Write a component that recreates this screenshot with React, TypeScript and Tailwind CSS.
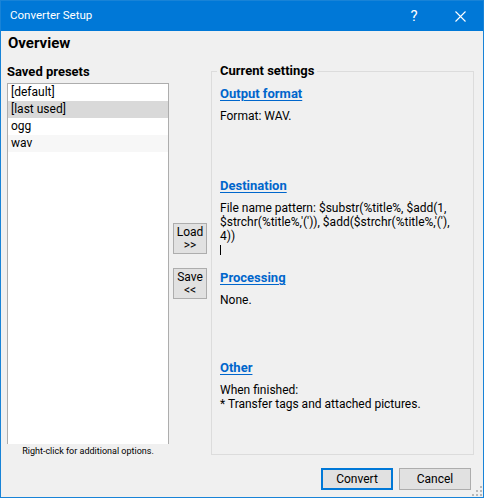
import React from 'react';

const presets = [
  { name: '[default]', bg: '' },
  { name: '[last used]', bg: 'bg-[#d9d9d9]' },
  { name: 'ogg', bg: '' },
  { name: 'wav', bg: 'bg-[#f7f7f7]' },
];

const SectionLink: React.FC<{ label: string }> = ({ label }) => (
  <div className="h-[18px] leading-[18px]">
    <span className="text-[13px] font-bold text-[#0066cc] underline underline-offset-2 cursor-pointer">{label}</span>
  </div>
);

const App: React.FC = () => {
  return (
    <div className="w-[484px] h-[498px] border border-[#1883d7] bg-[#f0f0f0] flex flex-col relative font-['Roboto',sans-serif] text-[12px] text-black">
      {/* Title bar */}
      <div className="h-[30px] bg-[#0078d7] flex items-center text-white">
        <span className="pl-[9px] flex-1 text-[11.5px]">Converter Setup</span>
        <span className="w-[46px] text-center text-[15px] leading-none">?</span>
        <span className="w-[46px] flex justify-center">
          <svg width="11" height="11" viewBox="0 0 11 11" stroke="white" strokeWidth="1.1">
            <path d="M0.5 0.5 L10.5 10.5 M10.5 0.5 L0.5 10.5" />
          </svg>
        </span>
      </div>

      {/* Header */}
      <div className="h-[24px] flex items-center pl-[7px] text-[15px] font-bold">Overview</div>

      {/* Main */}
      <div className="flex-1 flex pl-[6px]">
        {/* Presets */}
        <div className="w-[162px] flex flex-col">
          <div className="h-[28px] pt-[9px] leading-[16px] text-[13px] font-bold">Saved presets</div>
          <div className="h-[361px] bg-white border-t border-l border-r border-[#adadad]">
            {presets.map(p => (
              <div key={p.name} className={`h-[17px] leading-[17px] px-[3px] ${p.bg}`}>{p.name}</div>
            ))}
          </div>
          <div className="text-center text-[9px] leading-[12px] mt-[1px] whitespace-nowrap">Right-click for additional options.</div>
        </div>

        {/* Load / Save */}
        <div className="ml-[4px] w-[34px] flex flex-col pt-[168px] gap-[14px]">
          <button className="h-[31px] w-[34px] bg-[#e1e1e1] border border-[#adadad] text-[12px] flex flex-col items-center justify-center">
            <span className="leading-[13px]">Load</span>
            <span className="leading-[13px]">&gt;&gt;</span>
          </button>
          <button className="h-[31px] w-[34px] bg-[#e1e1e1] border border-[#adadad] text-[12px] flex flex-col items-center justify-center">
            <span className="leading-[13px]">Save</span>
            <span className="leading-[13px]">&lt;&lt;</span>
          </button>
        </div>

        {/* Current settings */}
        <div className="ml-[4px] mt-[16px] w-[263px] h-[384px] border border-[#dcdcdc] relative pl-[8px] pt-[13px]">
          <span className="absolute -top-[10px] left-[5px] px-[3px] bg-[#f0f0f0] text-[13px] font-bold leading-[18px]">Current settings</span>

          <div className="h-[92px]">
            <SectionLink label="Output format" />
            <div className="mt-[6px] leading-[14px]">Format: WAV.</div>
          </div>

          <div className="h-[92px]">
            <SectionLink label="Destination" />
            <div className="mt-[6px] leading-[14px]">
              <div>File name pattern: $substr(%title%, $add(1,</div>
              <div>$strchr(%title%,'(')), $add($strchr(%title%,'('),</div>
              <div>4))</div>
              <div className="h-[14px] flex items-center">
                <span className="w-px h-[10px] bg-black" />
              </div>
            </div>
          </div>

          <div className="h-[90px]">
            <SectionLink label="Processing" />
            <div className="mt-[6px] leading-[14px]">None.</div>
          </div>

          <div>
            <SectionLink label="Other" />
            <div className="mt-[6px] leading-[14px]">
              <div>When finished:</div>
              <div>* Transfer tags and attached pictures.</div>
            </div>
          </div>
        </div>
      </div>

      {/* Footer */}
      <div className="flex justify-end gap-[6px] pr-[12px] pb-[7px]">
        <button className="w-[72px] h-[22px] bg-[#e1e1e1] border-2 border-[#0078d7] text-[12px]">Convert</button>
        <button className="w-[72px] h-[22px] bg-[#e1e1e1] border border-[#adadad] text-[12px]">Cancel</button>
      </div>

      {/* Size grip */}
      <svg className="absolute right-[1px] bottom-[1px]" width="10" height="10" viewBox="0 0 10 10" fill="#b8b8b8">
        <rect x="8" y="0" width="2" height="2" />
        <rect x="4" y="4" width="2" height="2" />
        <rect x="8" y="4" width="2" height="2" />
        <rect x="0" y="8" width="2" height="2" />
        <rect x="4" y="8" width="2" height="2" />
        <rect x="8" y="8" width="2" height="2" />
      </svg>
    </div>
  );
};

export default App;
